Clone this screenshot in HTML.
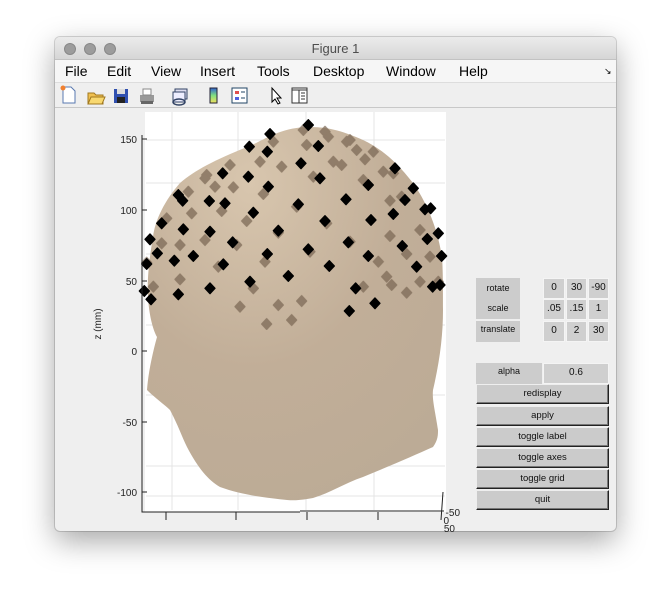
<!DOCTYPE html>
<html><head><meta charset="utf-8"><style>
*{margin:0;padding:0;box-sizing:border-box}
body{width:672px;height:605px;background:#fff;position:relative;overflow:hidden;font-family:"Liberation Sans",Arial,sans-serif}
.win{position:absolute;left:55px;top:37px;width:561px;height:494px;background:#efefef;border-radius:5px;box-shadow:0 10px 30px rgba(0,0,0,.35),0 0 0 1px rgba(0,0,0,.15);overflow:hidden}
.title{position:absolute;left:0;top:0;width:100%;height:23px;background:linear-gradient(#ebebeb,#d6d6d6);border-bottom:1px solid #c2c2c2;text-align:center;font-size:13px;color:#4d4d4d;line-height:23px}
.dot{position:absolute;top:6px;width:12px;height:12px;border-radius:50%;background:#9c9c9c;border:1px solid #888}
.menu{position:absolute;top:23px;left:0;width:100%;height:22px;background:#f6f6f6;font-size:14px;color:#000}
.menu span{position:absolute;top:3px}
.tool{position:absolute;top:45px;left:0;width:100%;height:26px;background:#efefef;border-top:1px solid #ddd;border-bottom:1px solid #c8c8c8}
.lbl{position:absolute;background:#cccccc;font-size:9px;text-align:center;color:#111}
.ed{position:absolute;background:#cfcfcf;border:1px solid #f4f4f4;font-size:10px;text-align:center;line-height:18px;color:#111}
.btn{position:absolute;left:421px;width:133px;height:20px;background:#cbcbcb;border:1px solid #222;border-top-color:#eee;border-left-color:#eee;box-shadow:inset -1px -1px 0 #777;font-size:9.5px;text-align:center;line-height:18px;color:#111}
</style></head><body>
<div class="win">
 <div class="title">Figure 1
  <div class="dot" style="left:9px"></div><div class="dot" style="left:29px"></div><div class="dot" style="left:49px"></div></div>
 <div class="menu">
  <span style="left:10px">File</span><span style="left:52px">Edit</span><span style="left:96px">View</span><span style="left:145px">Insert</span><span style="left:202px">Tools</span><span style="left:258px">Desktop</span><span style="left:331px">Window</span><span style="left:404px">Help</span><span style="left:549px;font-size:9px;top:6px">↘</span>
 </div>
 <div class="tool">
  <svg width="561" height="26" style="position:absolute;left:0;top:0">
   <path d="M8 4h8l4 4v12H8z" fill="#fff" stroke="#5a7ab0"/><circle cx="8" cy="5" r="2.5" fill="#f08030"/>
   <path d="M33 10h6l2 2h7v9H33z" fill="#f0c050" stroke="#a07820"/><path d="M33 21l3-7h14l-3 7z" fill="#f8d870" stroke="#a07820"/>
   <rect x="59" y="6" width="14" height="14" fill="#3050b0"/><rect x="62" y="6" width="8" height="5" fill="#ddd"/><rect x="62" y="14" width="8" height="6" fill="#222"/>
   <path d="M85 12h14v7H85z" fill="#999"/><path d="M88 6h8v6h-8z" fill="#fff" stroke="#888"/><rect x="86" y="18" width="12" height="3" fill="#666"/>
   <rect x="120" y="6" width="12" height="10" fill="#dde" stroke="#346"/><rect x="118" y="9" width="12" height="10" fill="#eef" stroke="#346"/><ellipse cx="124" cy="19" rx="6" ry="3" fill="none" stroke="#346" stroke-width="1.5"/>
   <defs><linearGradient id="cb" x1="0" y1="0" x2="0" y2="1"><stop offset="0" stop-color="#3060d0"/><stop offset=".5" stop-color="#80e080"/><stop offset="1" stop-color="#f0e060"/></linearGradient></defs>
   <rect x="155" y="5" width="7" height="15" fill="url(#cb)" stroke="#223"/>
   <rect x="177" y="5" width="15" height="15" fill="#fff" stroke="#246"/><rect x="180" y="8" width="4" height="3" fill="#e05050"/><rect x="180" y="14" width="4" height="3" fill="#5060e0"/><path d="M186 9h4M186 15h4" stroke="#246"/>
   <path d="M217 5v14l3-3 3 5 2-1-3-5h4z" fill="#fff" stroke="#000"/>
   <rect x="237" y="5" width="15" height="15" fill="#fff" stroke="#333"/><path d="M237 7h15M244 7v13M246 10h4M246 13h4M246 16h4" stroke="#333"/>
  </svg>
 </div>
</div>
<svg width="672" height="605" style="position:absolute;left:0;top:0">
 <defs><radialGradient id="hg" cx="0.35" cy="0.15" r="0.9"><stop offset="0" stop-color="#d8c6ae"/><stop offset=".55" stop-color="#c1ae98"/><stop offset="1" stop-color="#bcab96"/></radialGradient>
 <polygon id="d" points="0,-16 15,0 0,16 -15,0" stroke-linejoin="round"/></defs>
 <path d="M145 112H446V512H145z" fill="#fff"/>
 <g stroke="#e4e4e4" stroke-width="1" fill="none">
  <path d="M146 140H445M146 183H445M146 254H445M146 325H445M146 395H445M146 466H445M146 496H445"/>
  <path d="M172 112V510M238 112V510M306 112V510M374 112V510"/>
 </g>
 <path d="M310 127C280 127 265 140 247 147C215 160 195 170 180 183C165 200 155 220 153 237C149 260 147 280 148 297C149 315 153 330 157 337C152 355 148 375 147 390C155 398 165 405 170 410C178 425 182 437 187 447C198 468 208 480 220 487C245 496 270 498 287 500C298 501 306 499 313 498C330 493 345 483 363 477C390 466 415 455 433 447C438 440 438 435 438 430C435 410 432 400 433 390C440 360 443 335 443 310C443 290 443 270 442 257C437 225 425 200 413 183C395 160 380 148 363 140C345 132 330 127 310 127Z" fill="url(#hg)"/>
 <g transform="translate(80,110) scale(0.3333)">
  <g fill="#7d6a57" opacity="0.75" stroke="#7d6a57" stroke-width="4" stroke-linejoin="round">
   <use href="#d" x="670" y="60"/><use href="#d" x="735" y="65"/><use href="#d" x="745" y="80"/><use href="#d" x="580" y="95"/><use href="#d" x="680" y="105"/><use href="#d" x="800" y="95"/><use href="#d" x="810" y="90"/><use href="#d" x="830" y="120"/><use href="#d" x="880" y="125"/><use href="#d" x="855" y="148"/><use href="#d" x="760" y="155"/><use href="#d" x="785" y="165"/><use href="#d" x="540" y="155"/><use href="#d" x="605" y="170"/><use href="#d" x="450" y="165"/><use href="#d" x="380" y="195"/><use href="#d" x="375" y="205"/><use href="#d" x="405" y="230"/><use href="#d" x="460" y="232"/><use href="#d" x="550" y="252"/><use href="#d" x="325" y="245"/><use href="#d" x="700" y="200"/><use href="#d" x="850" y="210"/><use href="#d" x="910" y="185"/><use href="#d" x="940" y="190"/><use href="#d" x="930" y="272"/><use href="#d" x="965" y="260"/><use href="#d" x="1020" y="360"/><use href="#d" x="930" y="378"/><use href="#d" x="980" y="432"/><use href="#d" x="1050" y="440"/><use href="#d" x="1020" y="515"/><use href="#d" x="920" y="500"/><use href="#d" x="935" y="525"/><use href="#d" x="895" y="455"/><use href="#d" x="850" y="530"/><use href="#d" x="650" y="290"/><use href="#d" x="500" y="333"/><use href="#d" x="425" y="303"/><use href="#d" x="335" y="310"/><use href="#d" x="300" y="405"/><use href="#d" x="260" y="325"/><use href="#d" x="245" y="400"/><use href="#d" x="200" y="458"/><use href="#d" x="220" y="530"/><use href="#d" x="300" y="508"/><use href="#d" x="375" y="390"/><use href="#d" x="470" y="405"/><use href="#d" x="555" y="455"/><use href="#d" x="415" y="470"/><use href="#d" x="520" y="535"/><use href="#d" x="480" y="590"/><use href="#d" x="595" y="585"/><use href="#d" x="635" y="630"/><use href="#d" x="560" y="642"/><use href="#d" x="665" y="573"/><use href="#d" x="595" y="368"/><use href="#d" x="690" y="425"/><use href="#d" x="740" y="340"/><use href="#d" x="810" y="395"/><use href="#d" x="980" y="548"/><use href="#d" x="1075" y="515"/>
  </g>
  <g fill="#000" stroke="#000" stroke-width="4" stroke-linejoin="round">
   <use href="#d" x="685" y="45"/><use href="#d" x="570" y="72"/><use href="#d" x="508" y="110"/><use href="#d" x="562" y="125"/><use href="#d" x="428" y="190"/><use href="#d" x="663" y="160"/><use href="#d" x="505" y="200"/><use href="#d" x="715" y="108"/><use href="#d" x="720" y="205"/><use href="#d" x="565" y="230"/><use href="#d" x="295" y="255"/><use href="#d" x="308" y="272"/><use href="#d" x="388" y="273"/><use href="#d" x="435" y="280"/><use href="#d" x="520" y="308"/><use href="#d" x="655" y="283"/><use href="#d" x="798" y="268"/><use href="#d" x="865" y="225"/><use href="#d" x="945" y="175"/><use href="#d" x="1000" y="235"/><use href="#d" x="975" y="270"/><use href="#d" x="1035" y="298"/><use href="#d" x="1052" y="295"/><use href="#d" x="940" y="312"/><use href="#d" x="873" y="330"/><use href="#d" x="735" y="333"/><use href="#d" x="595" y="362"/><use href="#d" x="390" y="365"/><use href="#d" x="310" y="358"/><use href="#d" x="245" y="340"/><use href="#d" x="210" y="388"/><use href="#d" x="232" y="430"/><use href="#d" x="200" y="462"/><use href="#d" x="193" y="543"/><use href="#d" x="213" y="568"/><use href="#d" x="283" y="452"/><use href="#d" x="340" y="438"/><use href="#d" x="458" y="397"/><use href="#d" x="430" y="463"/><use href="#d" x="562" y="432"/><use href="#d" x="685" y="418"/><use href="#d" x="748" y="468"/><use href="#d" x="805" y="397"/><use href="#d" x="865" y="438"/><use href="#d" x="1010" y="470"/><use href="#d" x="1042" y="387"/><use href="#d" x="1075" y="370"/><use href="#d" x="1085" y="438"/><use href="#d" x="967" y="408"/><use href="#d" x="625" y="498"/><use href="#d" x="510" y="515"/><use href="#d" x="390" y="535"/><use href="#d" x="295" y="553"/><use href="#d" x="827" y="535"/><use href="#d" x="885" y="580"/><use href="#d" x="808" y="603"/><use href="#d" x="1058" y="530"/><use href="#d" x="1080" y="525"/>
  </g>
 </g>
 <g stroke="#222" stroke-width="1" fill="none">
  <path d="M142 135V512H300M300 511H444M443 492L441 520"/>
  <path d="M142 139h5M142 210h5M142 281h5M142 351h5M142 422h5M142 492h5"/>
  <path d="M166 512v8M236 512v8M307 512v8M378 512v8"/>
 </g>
 <g font-size="10" fill="#222" text-anchor="end" font-family="Liberation Sans,Arial,sans-serif">
  <text x="137" y="143">150</text><text x="137" y="214">100</text><text x="137" y="285">50</text><text x="137" y="355">0</text><text x="137" y="426">-50</text><text x="137" y="496">-100</text>
  <text x="460" y="516">-50</text><text x="449" y="524">0</text><text x="455" y="532">50</text>
  <text transform="translate(101,324) rotate(-90)" text-anchor="middle">z (mm)</text>
 </g>
</svg>
<div class="win" style="background:none;box-shadow:none;pointer-events:none;overflow:visible">
 <div class="lbl" style="left:421px;top:241px;width:44px;height:41px;padding-top:0px;line-height:20px">rotate<br>scale</div>
 <div class="lbl" style="left:421px;top:284px;width:44px;height:21px;line-height:16px">translate</div>
 <div class="ed" style="left:488px;top:241px;width:22px;height:21px">0</div><div class="ed" style="left:511px;top:241px;width:21px;height:21px">30</div><div class="ed" style="left:533px;top:241px;width:21px;height:21px">-90</div>
 <div class="ed" style="left:488px;top:262px;width:22px;height:21px">.05</div><div class="ed" style="left:511px;top:262px;width:21px;height:21px">.15</div><div class="ed" style="left:533px;top:262px;width:21px;height:21px">1</div>
 <div class="ed" style="left:488px;top:284px;width:22px;height:21px">0</div><div class="ed" style="left:511px;top:284px;width:21px;height:21px">2</div><div class="ed" style="left:533px;top:284px;width:21px;height:21px">30</div>
 <div class="lbl" style="left:421px;top:326px;width:66px;height:21px;line-height:16px">alpha</div>
 <div class="ed" style="left:488px;top:326px;width:66px;height:21px">0.6</div>
 <div class="btn" style="top:347px">redisplay</div>
 <div class="btn" style="top:369px">apply</div>
 <div class="btn" style="top:390px">toggle label</div>
 <div class="btn" style="top:411px">toggle axes</div>
 <div class="btn" style="top:432px">toggle grid</div>
 <div class="btn" style="top:453px">quit</div>
</div>
</body></html>
